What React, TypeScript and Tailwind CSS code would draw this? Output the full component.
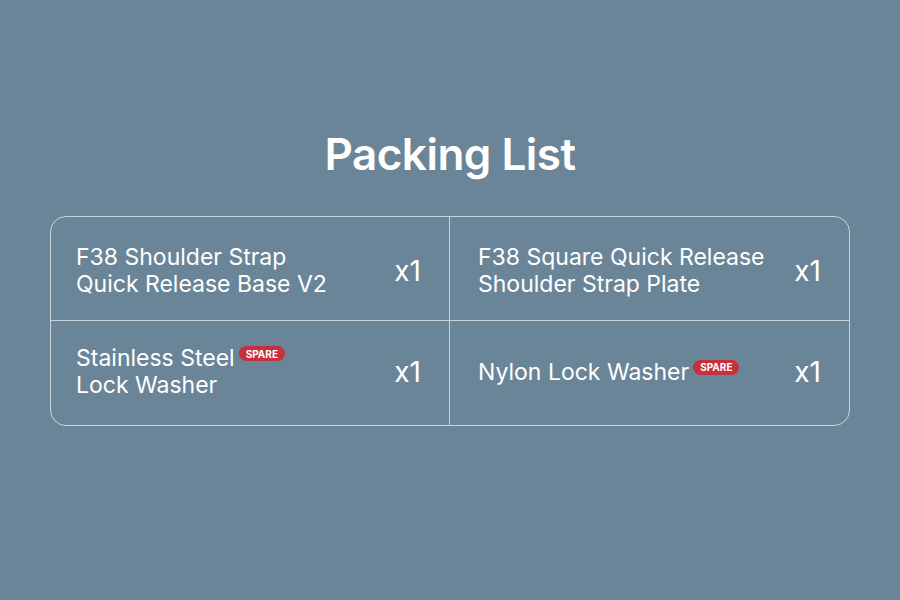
const items = [
  { lines: ['F38 Shoulder Strap', 'Quick Release Base V2'], qty: 'x1', spare: false },
  { lines: ['F38 Square Quick Release', 'Shoulder Strap Plate'], qty: 'x1', spare: false },
  { lines: ['Stainless Steel', 'Lock Washer'], qty: 'x1', spare: true },
  { lines: ['Nylon Lock Washer'], qty: 'x1', spare: true },
]

function Spare() {
  return (
    <span className="ml-1 mt-[1px] inline-flex h-[15px] items-center rounded-full bg-[#c4303b] px-[7px] align-top text-[10px] font-bold leading-none text-white">
      SPARE
    </span>
  )
}

export default function App() {
  return (
    <div
      className="flex h-[600px] w-[900px] flex-col items-center bg-[#6a8598] text-white"
      style={{ fontFamily: 'Inter, "Noto Sans", sans-serif' }}
    >
      <h1 className="mt-[126px] text-[44px] font-semibold leading-[56px] tracking-[-0.5px]">Packing List</h1>

      <div className="mt-[34px] grid w-[800px] grid-cols-2 overflow-hidden rounded-[16px] border border-[#c9d3da]">
        {items.map((item, i) => (
          <div
            key={i}
            className={`flex h-[104px] items-center justify-between pr-[28px] ${i % 2 === 0 ? 'border-r border-[#c9d3da] pl-[25px]' : 'pl-[28px]'} ${i < 2 ? 'border-b border-[#c9d3da] pt-[4px]' : 'pb-[2px]'}`}
          >
            <div className="text-[23px] font-normal leading-[27px]">
              {item.lines.map((line, j) => (
                <div key={j}>
                  {line}
                  {item.spare && j === 0 && <Spare />}
                </div>
              ))}
            </div>
            <div className="text-[28px] font-normal">{item.qty}</div>
          </div>
        ))}
      </div>
    </div>
  )
}
